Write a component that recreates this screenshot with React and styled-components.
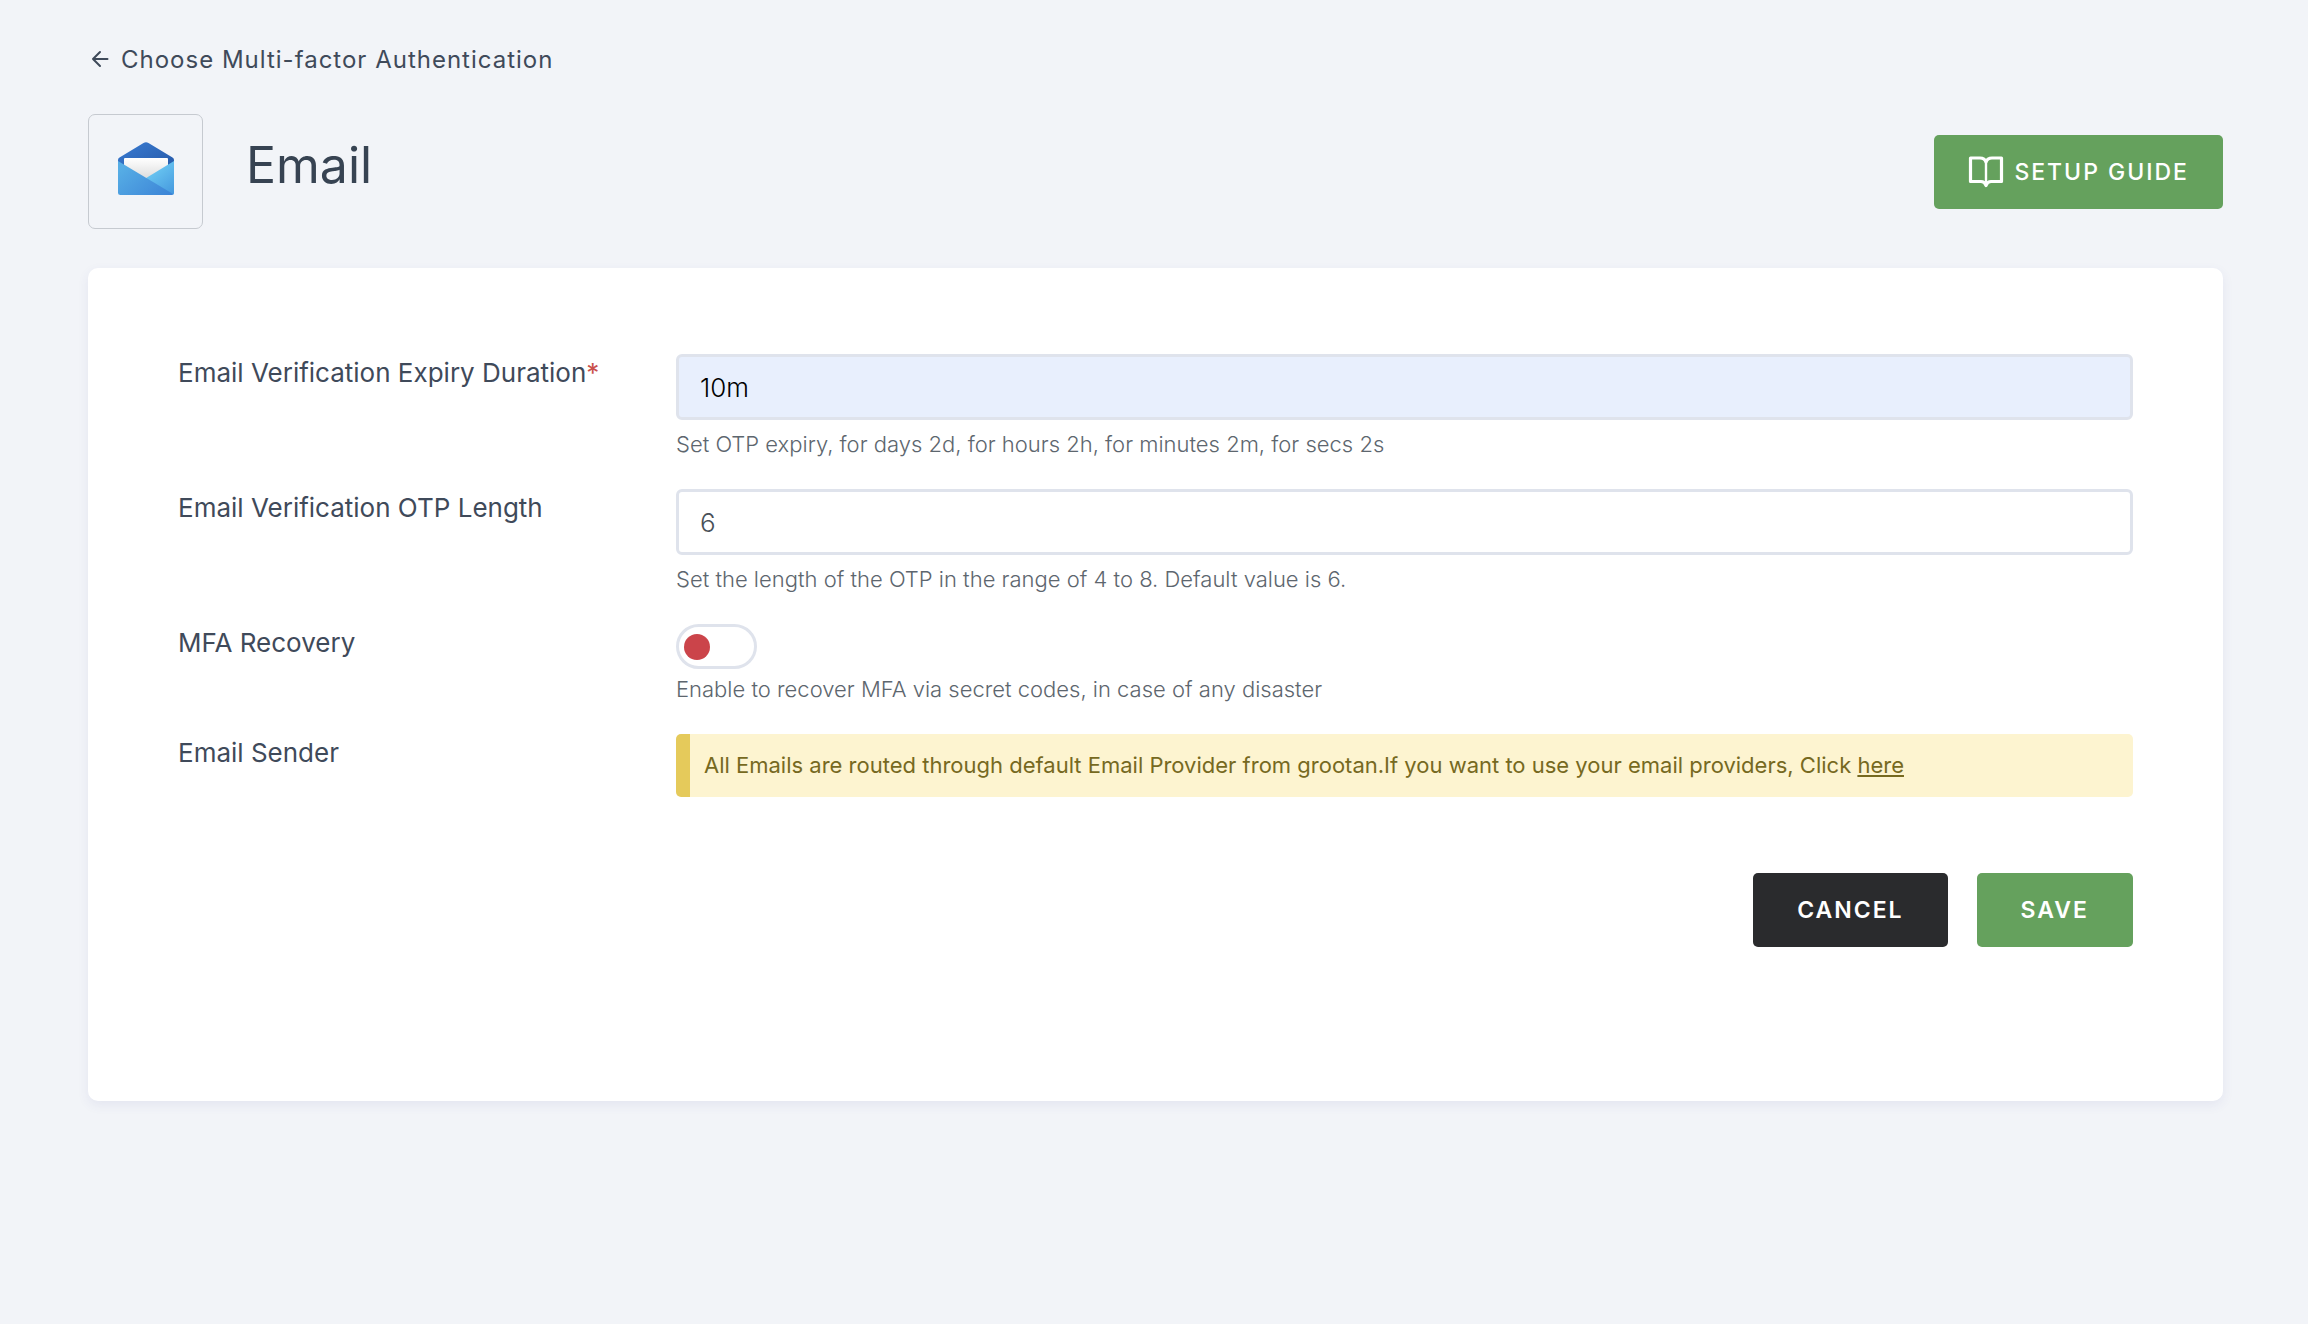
import React, { useState } from "react";
import styled, { createGlobalStyle } from "styled-components";

const GlobalStyle = createGlobalStyle`
  * {
    box-sizing: border-box;
  }

  body {
    margin: 0;
    background-color: #f2f4f8;
    color: #3f4a5a;
    font-family: Inter, "Liberation Sans", sans-serif;
    font-size: 26px;
  }
`;

const Page = styled.main`
  padding: 45px 85px 45px 88px;
`;

const BackLink = styled.a`
  display: flex;
  align-items: center;
  gap: 10px;
  width: fit-content;
  padding-left: 3px;
  color: inherit;
  font-size: 24px;
  line-height: 30px;
  letter-spacing: 1px;
  text-decoration: none;
`;

const Header = styled.header`
  display: flex;
  align-items: center;
  margin: 39px 0;
`;

const LogoBox = styled.div`
  display: flex;
  align-items: center;
  justify-content: center;
  width: 115px;
  height: 115px;
  padding-bottom: 6px;
  border: 1px solid #c6cad0;
  border-radius: 7px;
`;

const Title = styled.h1`
  flex: 1;
  margin: 0 0 14px 43px;
  color: #374352;
  font-size: 50px;
  font-weight: 400;
  line-height: 60px;
`;

const Button = styled.button`
  display: inline-flex;
  align-items: center;
  gap: 10px;
  height: 74px;
  padding: 0 ${(props) => (props.$wide ? "44px" : "34px")};
  border: 0;
  border-radius: 5px;
  background-color: ${(props) => (props.$dark ? "#2a2b2d" : "#65a15d")};
  color: #fff;
  font-family: inherit;
  font-size: 23px;
  font-weight: ${(props) => (props.$wide ? 600 : 500)};
  letter-spacing: 2px;
  text-transform: uppercase;
`;

const Card = styled.form`
  padding: 86px 90px 154px;
  border-radius: 10px;
  background-color: #fff;
  box-shadow: 0 4px 12px rgba(60, 70, 150, 0.08);
`;

const Row = styled.div`
  display: grid;
  grid-template-columns: 498px 1fr;
  align-items: start;

  & + & {
    margin-top: 30px;
  }
`;

const Label = styled.label`
  line-height: 38px;
`;

const Required = styled.span`
  color: #c9504c;
`;

const TextInput = styled.input`
  display: block;
  width: 100%;
  height: 66px;
  padding: 0 21px;
  border: 3px solid #dfe3ec;
  border-radius: 6px;
  background-color: ${(props) => (props.$filled ? "#e8effd" : "#fff")};
  color: ${(props) => (props.$filled ? "#000" : "#495057")};
  font-family: inherit;
  font-size: 26px;
  font-weight: 300;
  outline: none;
`;

const Toggle = styled.input`
  display: flex;
  align-items: center;
  appearance: none;
  width: 81px;
  height: 45px;
  margin: 0;
  padding: 0 5px;
  border: 3px solid #dfe3ec;
  border-radius: 23px;
  background-color: #fff;

  &::before {
    content: "";
    width: 26px;
    height: 26px;
    border-radius: 50%;
    background-color: #cb444a;
  }

  &:checked {
    justify-content: flex-end;
  }

  &:checked::before {
    background-color: #65a15d;
  }
`;

const Help = styled.p`
  margin: ${(props) => (props.$tight ? "5px" : "9px")} 0 0;
  color: #5d666e;
  font-size: 22px;
  font-weight: 300;
  line-height: 30px;
`;

const Notice = styled.div`
  padding: 16px 14px;
  border-left: 14px solid #e5ca5b;
  border-radius: 5px;
  background-color: #fdf4d0;
  color: #76691f;
  font-size: 22px;
  font-weight: 400;
  line-height: 31px;

  & > a {
    color: inherit;
  }
`;

const Actions = styled.div`
  display: flex;
  justify-content: flex-end;
  gap: 29px;
  margin-top: 76px;
`;

const ArrowIcon = () => (
  <svg width="20" height="20" viewBox="0 0 20 20" fill="none" aria-hidden="true">
    <path
      d="M16.5 9H2M9 2 2 9l7 7"
      stroke="currentColor"
      strokeWidth="2"
      strokeLinecap="round"
      strokeLinejoin="round"
    />
  </svg>
);

const BookIcon = () => (
  <svg width="36" height="34" viewBox="0 0 36 34" fill="none" aria-hidden="true">
    <path
      d="M18 7C17 4 15 3 12 3H2.500v23.500H13c3 0 4 1 5 4 1-3 2-4 5-4h10.500V3H24c-3 0-5 1-6 4Z"
      stroke="currentColor"
      strokeWidth="3.2"
      strokeLinejoin="round"
    />
    <path d="M18 6v24" stroke="currentColor" strokeWidth="2.400" />
  </svg>
);

const MailIcon = () => (
  <svg width="56" height="54" viewBox="0 0 56 54" aria-hidden="true">
    <defs>
      <linearGradient id="flap" x1="0" y1="0" x2="1" y2="1">
        <stop offset="0" stopColor="#3a7cd3" />
        <stop offset="1" stopColor="#2456a4" />
      </linearGradient>
      <linearGradient id="paper" x1="0" y1="0" x2="0" y2="1">
        <stop offset="0" stopColor="#fff" />
        <stop offset="1" stopColor="#dedede" />
      </linearGradient>
      <linearGradient id="right" x1="0.3" y1="0.3" x2="0.9" y2="1">
        <stop offset="0" stopColor="#6bc8f2" />
        <stop offset="1" stopColor="#469adf" />
      </linearGradient>
      <linearGradient id="left" x1="0" y1="0.3" x2="1" y2="1">
        <stop offset="0" stopColor="#56ade5" />
        <stop offset="1" stopColor="#3b82d6" />
      </linearGradient>
    </defs>
    <path
      d="M0 18Q0 16.500 1.500 15.600L25.500 1Q28 -.5 30.500 1L54.500 15.600Q56 16.500 56 18V32H0Z"
      fill="url(#flap)"
    />
    <path d="M6 17a1 1 0 0 1 1-1h42a1 1 0 0 1 1 1v19H6Z" fill="url(#paper)" />
    <path d="M56 19v32q0 1-.8 1.500L20 41Z" fill="url(#right)" />
    <path d="M0 19l55.500 33.200q-.8.8-2 .8H2.500Q0 53 0 50.500Z" fill="url(#left)" />
  </svg>
);

const App = () => {
  const [expiry, setExpiry] = useState("10m");
  const [otpLength, setOtpLength] = useState("6");
  const [recovery, setRecovery] = useState(false);

  return (
    <Page>
      <GlobalStyle />
      <BackLink href="#">
        <ArrowIcon />
        Choose Multi-factor Authentication
      </BackLink>
      <Header>
        <LogoBox>
          <MailIcon />
        </LogoBox>
        <Title>Email</Title>
        <Button type="button">
          <BookIcon />
          Setup Guide
        </Button>
      </Header>
      <Card onSubmit={(e) => e.preventDefault()}>
        <Row>
          <Label htmlFor="expiry">
            Email Verification Expiry Duration<Required>*</Required>
          </Label>
          <div>
            <TextInput
              id="expiry"
              type="text"
              $filled
              value={expiry}
              onChange={(e) => setExpiry(e.target.value)}
            />
            <Help>
              Set OTP expiry, for days 2d, for hours 2h, for minutes 2m, for
              secs 2s
            </Help>
          </div>
        </Row>
        <Row>
          <Label htmlFor="otp-length">Email Verification OTP Length</Label>
          <div>
            <TextInput
              id="otp-length"
              type="text"
              value={otpLength}
              onChange={(e) => setOtpLength(e.target.value)}
            />
            <Help>
              Set the length of the OTP in the range of 4 to 8. Default value is
              6.
            </Help>
          </div>
        </Row>
        <Row>
          <Label htmlFor="recovery">MFA Recovery</Label>
          <div>
            <Toggle
              id="recovery"
              type="checkbox"
              checked={recovery}
              onChange={(e) => setRecovery(e.target.checked)}
            />
            <Help $tight>
              Enable to recover MFA via secret codes, in case of any disaster
            </Help>
          </div>
        </Row>
        <Row>
          <Label as="span">Email Sender</Label>
          <Notice>
            All Emails are routed through default Email Provider from
            grootan.If you want to use your email providers, Click{" "}
            <a href="#">here</a>
          </Notice>
        </Row>
        <Actions>
          <Button type="button" $wide $dark>
            Cancel
          </Button>
          <Button type="submit" $wide>
            Save
          </Button>
        </Actions>
      </Card>
    </Page>
  );
};

export default App;
